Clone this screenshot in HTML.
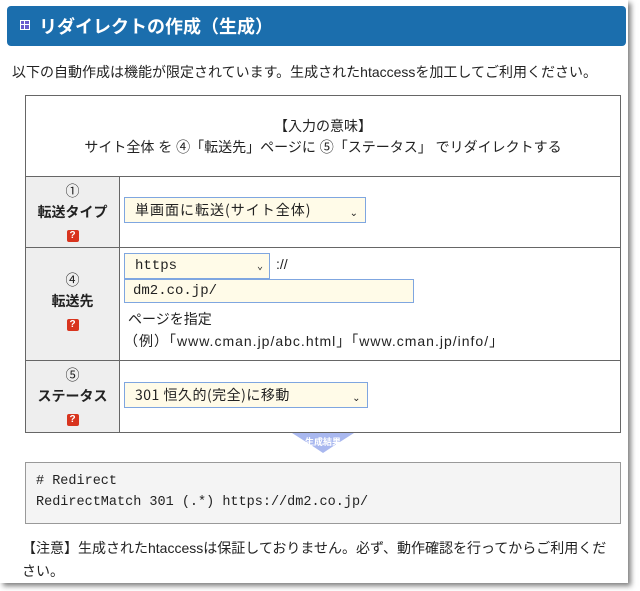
<!DOCTYPE html>
<html><head><meta charset="utf-8"><style>
body{margin:0;width:640px;height:591px;background:#fff;position:relative;overflow:hidden;font-family:"Liberation Sans","Noto Sans CJK JP",sans-serif;color:#222}
.frame{position:absolute;left:0;top:0;width:628px;height:583px;background:#fff;box-shadow:3px 3px 5px rgba(0,0,0,.5)}
.a{position:absolute;white-space:nowrap}
.bar{position:absolute;left:7px;top:6px;width:619px;height:40px;background:#1b6ead;border-radius:4px}
.tbl{position:absolute;left:25px;top:95px;width:594px;height:336px;border:1px solid #666}
.lab{position:absolute;left:0;width:93px;background:#eee;border-right:1px solid #666;text-align:center;font-size:14px;font-weight:bold}
.hl{position:absolute;left:0;width:594px;border-top:1px solid #666}
.q{display:inline-block;width:12px;height:12px;background:#d8341e;color:#fff;font-size:10px;line-height:12px;border-radius:2px;font-weight:bold}
.sel{position:absolute;background:#fffbe8;border:1px solid #7fa6e0;font-size:14px;font-family:"Liberation Mono","Noto Sans CJK JP",monospace}
.sel span.c{position:absolute;right:6px;top:2px;font-size:10px}
</style></head><body>
<div class="frame"></div>
<div class="bar"></div>
<div class="a" style="left:20px;top:20px;width:10px;height:10px;background:#fff"><div style="position:absolute;left:1px;top:1px;width:8px;height:8px;background:#6a5acd"></div><div style="position:absolute;left:4px;top:0;width:1px;height:10px;background:#fff"></div><div style="position:absolute;left:0;top:4px;width:10px;height:1px;background:#fff"></div></div>
<div class="a" style="left:39px;top:13px;font-size:18px;font-weight:bold;color:#fff">リダイレクトの作成（生成）</div>
<div class="a" style="left:12px;top:62px;font-size:14px">以下の自動作成は機能が限定されています。生成されたhtaccessを加工してご利用ください。</div>
<div class="tbl">
 <div class="a" style="left:0;width:594px;top:20px;text-align:center;font-size:14px;line-height:21px">【入力の意味】<br>サイト全体 を ④「転送先」ページに ⑤「ステータス」 でリダイレクトする</div>
 <div class="hl" style="top:80px"></div>
 <div class="lab" style="top:81px;height:70px;padding-top:0"><div style="margin-top:4px;font-weight:normal;font-size:14px">①</div><div style="margin-top:1px">転送タイプ</div><div style="margin-top:3px"><span class="q">?</span></div></div>
 <div class="sel" style="left:98px;top:101px;width:230px;height:24px;line-height:24px;padding-left:10px;letter-spacing:1px;font-family:'Noto Sans CJK JP',sans-serif">単画面に転送(サイト全体)<span class="c">⌄</span></div>
 <div class="hl" style="top:151px"></div>
 <div class="lab" style="top:152px;height:112px"><div style="margin-top:22px;font-weight:normal;font-size:14px">④</div><div style="margin-top:1px">転送先</div><div style="margin-top:3px"><span class="q">?</span></div></div>
 <div class="sel" style="left:98px;top:157px;width:134px;height:24px;line-height:24px;padding-left:10px">https<span class="c">⌄</span></div>
 <div class="a" style="left:250px;top:160px;font-size:14px">://</div>
 <div class="sel" style="left:98px;top:183px;width:280px;height:22px;line-height:22px;padding-left:8px">dm2.co.jp/</div>
 <div class="a" style="left:102px;top:213px;font-size:14px">ページを指定</div>
 <div class="a" style="left:98px;top:235px;font-size:14px;letter-spacing:1px">（例）「www.cman.jp/abc.html」「www.cman.jp/info/」</div>
 <div class="hl" style="top:264px"></div>
 <div class="lab" style="top:265px;height:71px"><div style="margin-top:4px;font-weight:normal;font-size:14px">⑤</div><div style="margin-top:1px">ステータス</div><div style="margin-top:3px"><span class="q">?</span></div></div>
 <div class="sel" style="left:98px;top:286px;width:232px;height:24px;line-height:24px;padding-left:10px;letter-spacing:0.5px;font-family:'Noto Sans CJK JP',sans-serif">301 恒久的(完全)に移動<span class="c">⌄</span></div>
</div>
<svg class="a" style="left:292px;top:433px" width="62" height="20"><polygon points="0,0 62,0 40,14 31,20 22,14" fill="#a9b8ef"/><text x="31" y="12" text-anchor="middle" font-size="9" font-weight="bold" fill="#fff" font-family="Noto Sans CJK JP">生成結果</text></svg>
<div class="a" style="left:25px;top:462px;width:594px;height:60px;background:#f4f4f4;border:1px solid #999"></div>
<div class="a" style="left:36px;top:471px;font-size:13.5px;line-height:21px;font-family:'Liberation Mono',monospace">
# Redirect<br>RedirectMatch 301 (.*) https://dm2.co.jp/</div>
<div class="a" style="left:22px;top:537px;font-size:14px;line-height:23px;white-space:normal;width:586px">【注意】生成されたhtaccessは保証しておりません。必ず、動作確認を行ってからご利用ください。</div>
</body></html>
